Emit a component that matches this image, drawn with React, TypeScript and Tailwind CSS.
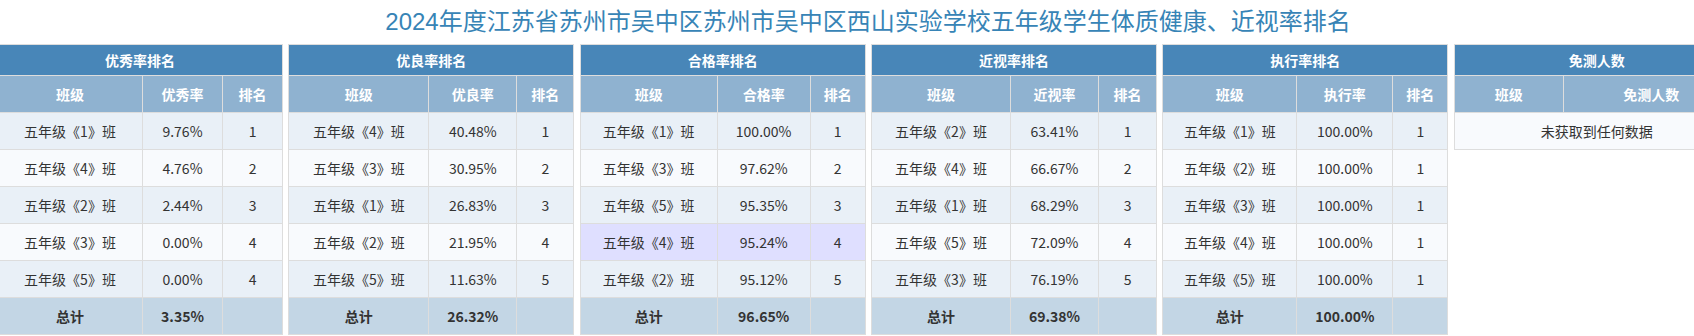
import React from "react";

interface Panel {
  title: string;
  columns: string[];
  colWidths: string[];
  rows: string[][];
  total?: string;
  highlight?: number;
}

const panels: Panel[] = [
  {
    title: "优秀率排名",
    columns: ["班级", "优秀率", "排名"],
    colWidths: ["w-[145px]", "w-[80px]", "w-[60px]"],
    rows: [
      ["五年级《1》班", "9.76%", "1"],
      ["五年级《4》班", "4.76%", "2"],
      ["五年级《2》班", "2.44%", "3"],
      ["五年级《3》班", "0.00%", "4"],
      ["五年级《5》班", "0.00%", "4"],
    ],
    total: "3.35%",
  },
  {
    title: "优良率排名",
    columns: ["班级", "优良率", "排名"],
    colWidths: ["w-[140px]", "w-[88px]", "w-[57px]"],
    rows: [
      ["五年级《4》班", "40.48%", "1"],
      ["五年级《3》班", "30.95%", "2"],
      ["五年级《1》班", "26.83%", "3"],
      ["五年级《2》班", "21.95%", "4"],
      ["五年级《5》班", "11.63%", "5"],
    ],
    total: "26.32%",
  },
  {
    title: "合格率排名",
    columns: ["班级", "合格率", "排名"],
    colWidths: ["w-[137px]", "w-[93px]", "w-[55px]"],
    rows: [
      ["五年级《1》班", "100.00%", "1"],
      ["五年级《3》班", "97.62%", "2"],
      ["五年级《5》班", "95.35%", "3"],
      ["五年级《4》班", "95.24%", "4"],
      ["五年级《2》班", "95.12%", "5"],
    ],
    total: "96.65%",
    highlight: 3,
  },
  {
    title: "近视率排名",
    columns: ["班级", "近视率", "排名"],
    colWidths: ["w-[139px]", "w-[88px]", "w-[58px]"],
    rows: [
      ["五年级《2》班", "63.41%", "1"],
      ["五年级《4》班", "66.67%", "2"],
      ["五年级《1》班", "68.29%", "3"],
      ["五年级《5》班", "72.09%", "4"],
      ["五年级《3》班", "76.19%", "5"],
    ],
    total: "69.38%",
  },
  {
    title: "执行率排名",
    columns: ["班级", "执行率", "排名"],
    colWidths: ["w-[134px]", "w-[96px]", "w-[55px]"],
    rows: [
      ["五年级《1》班", "100.00%", "1"],
      ["五年级《2》班", "100.00%", "1"],
      ["五年级《3》班", "100.00%", "1"],
      ["五年级《4》班", "100.00%", "1"],
      ["五年级《5》班", "100.00%", "1"],
    ],
    total: "100.00%",
  },
  {
    title: "免测人数",
    columns: ["班级", "免测人数"],
    colWidths: ["w-[109px]", "w-[176px]"],
    rows: [],
  },
];

const cell = "border border-[#dddddd] px-2 py-2 leading-5 text-center";

function RankTable({ panel }: { panel: Panel }) {
  return (
    <table className="w-full table-fixed border-collapse text-sm text-[#333333]">
      <colgroup>
        {panel.colWidths.map((w, i) => (
          <col key={i} className={w} />
        ))}
      </colgroup>
      <thead>
        <tr className="bg-[#4886b8]">
          <th
            colSpan={panel.columns.length}
            className="border border-[#dddddd] py-[5px] leading-5 text-center font-bold text-white"
          >
            {panel.title}
          </th>
        </tr>
        <tr className="bg-[#8fb2d0]">
          {panel.columns.map((c) => (
            <th key={c} className={`${cell} font-bold text-white`}>
              {c}
            </th>
          ))}
        </tr>
      </thead>
      <tbody>
        {panel.rows.length === 0 ? (
          <tr className="bg-[#f8fafd]">
            <td colSpan={panel.columns.length} className={cell}>
              未获取到任何数据
            </td>
          </tr>
        ) : (
          panel.rows.map((r, i) => (
            <tr
              key={i}
              className={
                panel.highlight === i
                  ? "bg-[#dfdfff]"
                  : i % 2 === 0
                  ? "bg-[#e9f0f7]"
                  : "bg-[#f8fafd]"
              }
            >
              {r.map((v, j) => (
                <td key={j} className={cell}>
                  {v}
                </td>
              ))}
            </tr>
          ))
        )}
        {panel.total && (
          <tr className="bg-[#c3d6e5] font-bold">
            <td className={cell}>总计</td>
            <td className={cell}>{panel.total}</td>
            <td className={cell}></td>
          </tr>
        )}
      </tbody>
    </table>
  );
}

export default function App() {
  return (
    <div
      className="w-full min-h-[336px] overflow-hidden bg-white"
      style={{ fontFamily: '"Noto Sans CJK SC", sans-serif' }}
    >
      <div className="w-[1748px] -ml-[6px]">
        <h2
          className="h-[44px] flex items-center justify-center text-[24px] font-normal text-[#3784b6]"
          style={{ fontFamily: '"Liberation Sans", "Noto Sans CJK SC", sans-serif' }}
        >
          2024年度江苏省苏州市吴中区苏州市吴中区西山实验学校五年级学生体质健康、近视率排名
        </h2>
        <div className="grid grid-cols-6">
          {panels.map((p) => (
            <div key={p.title} className="px-[3px]">
              <RankTable panel={p} />
            </div>
          ))}
        </div>
      </div>
    </div>
  );
}
